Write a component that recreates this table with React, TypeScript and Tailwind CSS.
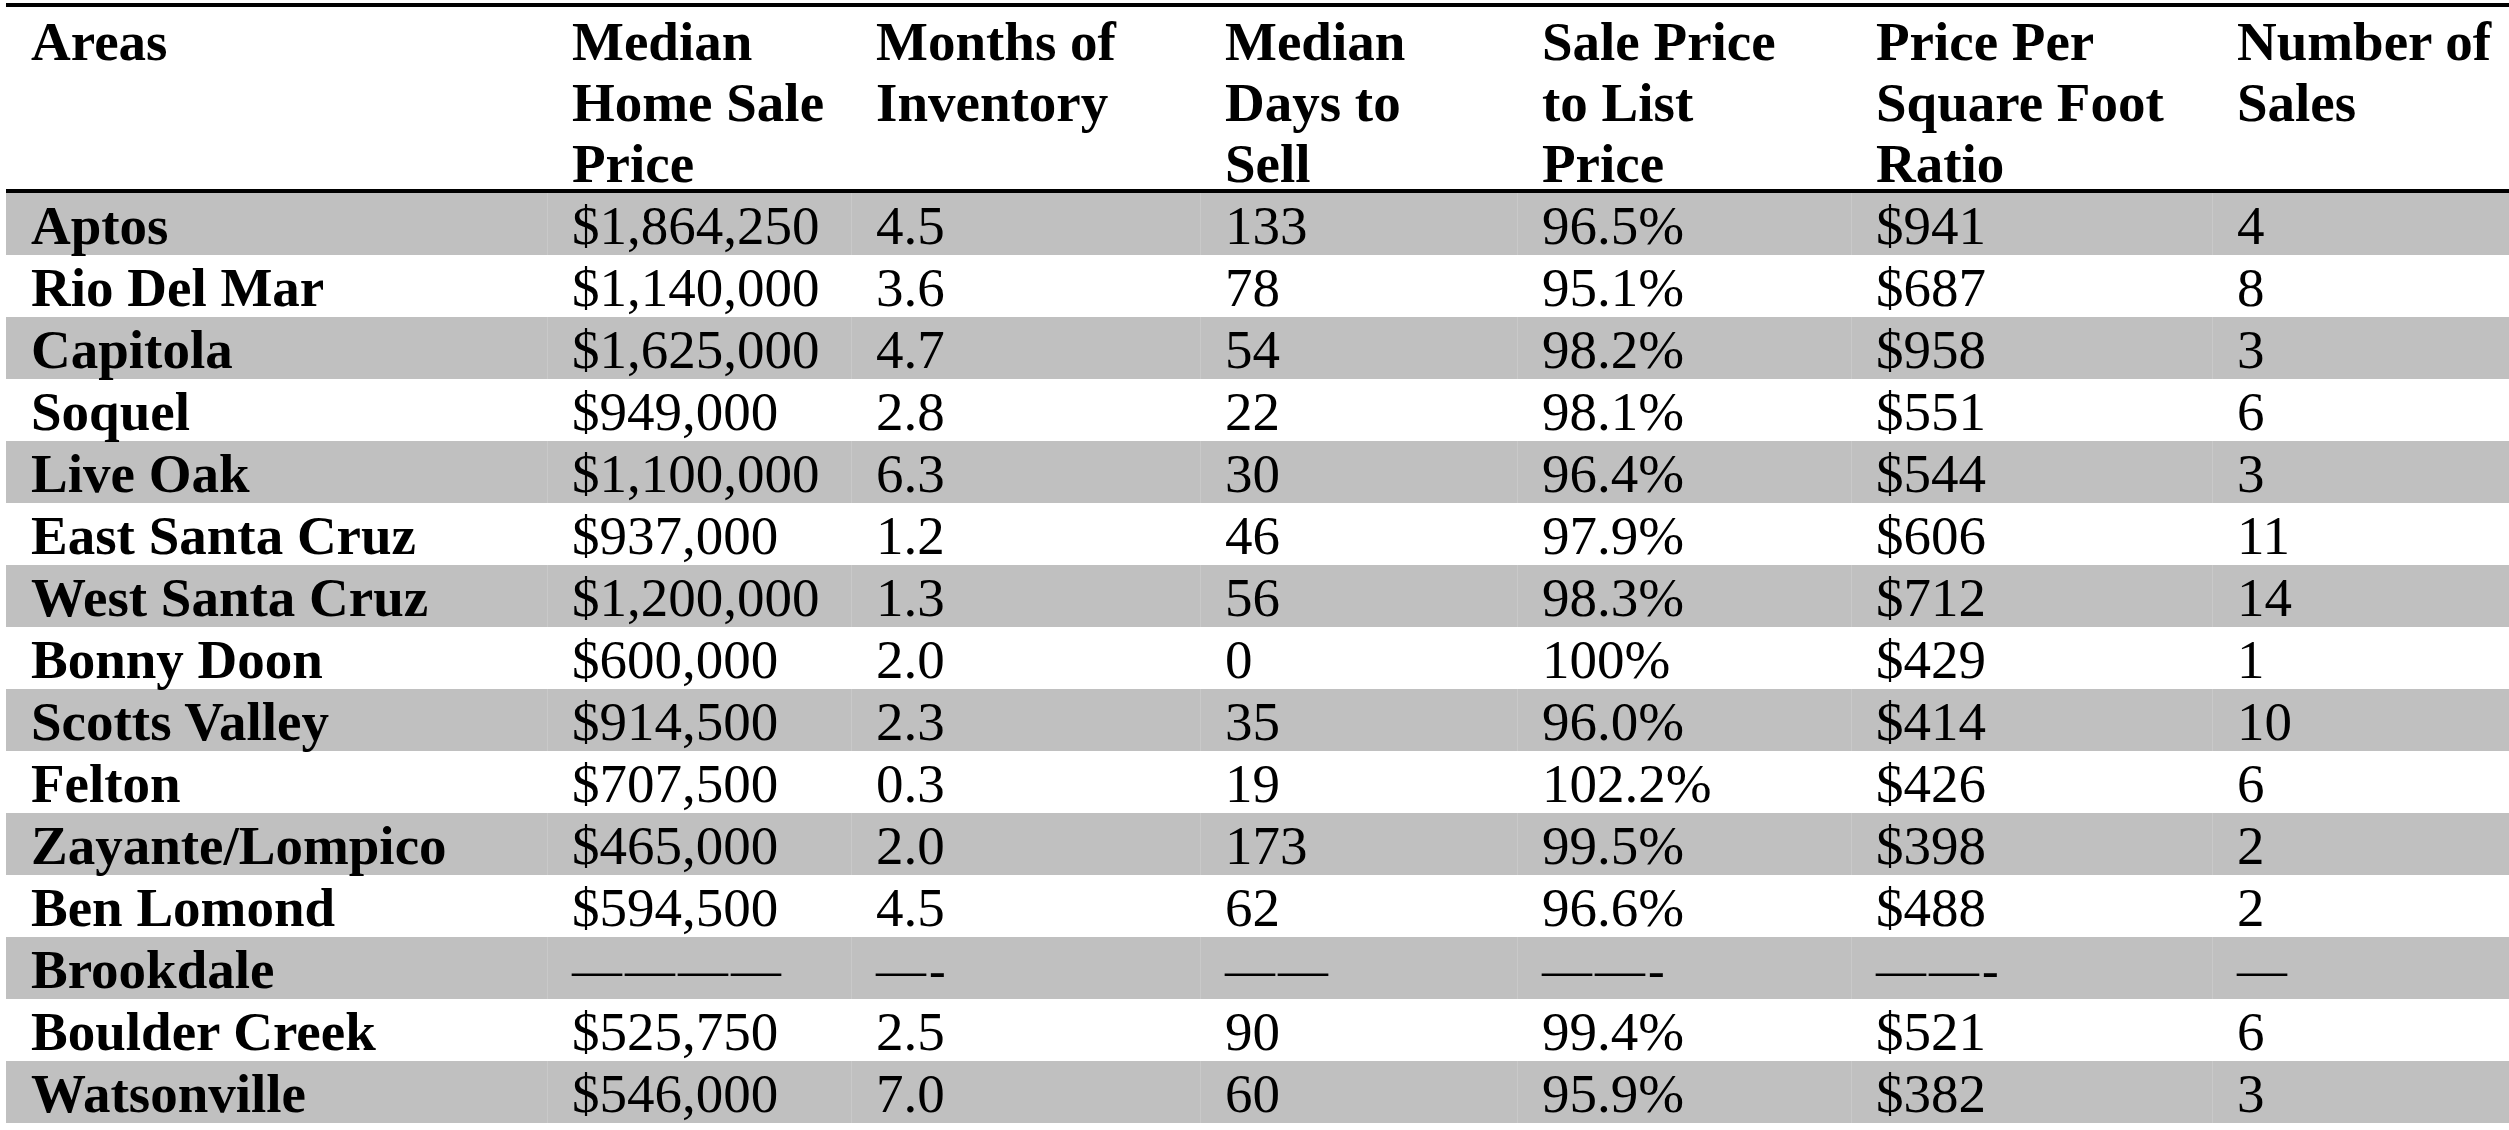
import clsx from 'clsx';

// Santa Cruz County market snapshot table
const headers: string[][] = [
  ['Areas'],
  ['Median', 'Home Sale', 'Price'],
  ['Months of', 'Inventory'],
  ['Median', 'Days to', 'Sell'],
  ['Sale Price', 'to List', 'Price'],
  ['Price Per', 'Square Foot', 'Ratio'],
  ['Number of', 'Sales'],
];

const rows: string[][] = [
  ['Aptos', '$1,864,250', '4.5', '133', '96.5%', '$941', '4'],
  ['Rio Del Mar', '$1,140,000', '3.6', '78', '95.1%', '$687', '8'],
  ['Capitola', '$1,625,000', '4.7', '54', '98.2%', '$958', '3'],
  ['Soquel', '$949,000', '2.8', '22', '98.1%', '$551', '6'],
  ['Live Oak', '$1,100,000', '6.3', '30', '96.4%', '$544', '3'],
  ['East Santa Cruz', '$937,000', '1.2', '46', '97.9%', '$606', '11'],
  ['West Santa Cruz', '$1,200,000', '1.3', '56', '98.3%', '$712', '14'],
  ['Bonny Doon', '$600,000', '2.0', '0', '100%', '$429', '1'],
  ['Scotts Valley', '$914,500', '2.3', '35', '96.0%', '$414', '10'],
  ['Felton', '$707,500', '0.3', '19', '102.2%', '$426', '6'],
  ['Zayante/Lompico', '$465,000', '2.0', '173', '99.5%', '$398', '2'],
  ['Ben Lomond', '$594,500', '4.5', '62', '96.6%', '$488', '2'],
  ['Brookdale', '————', '—-', '——', '——-', '——-', '—'],
  ['Boulder Creek', '$525,750', '2.5', '90', '99.4%', '$521', '6'],
  ['Watsonville', '$546,000', '7.0', '60', '95.9%', '$382', '3'],
];

const cols = 'grid grid-cols-[541px_304px_349px_317px_334px_361px_297px]';

export default function App() {
  return (
    <div className="w-[2509px] h-[1130px] overflow-hidden bg-white pt-[3px] pl-[6px] font-['Liberation_Serif',serif] text-[55px] text-black">
      <div className="border-t-4 border-black">
        {/* Header */}
        <div className={clsx(cols, 'h-[186px] border-b-4 border-black')}>
          {headers.map((lines, i) => (
            <div key={i} className="pl-[25px] pt-[4px] font-bold leading-[61px] whitespace-nowrap">
              {lines.map((l) => (
                <div key={l}>{l}</div>
              ))}
            </div>
          ))}
        </div>

        {/* Body */}
        {rows.map((row, r) => {
          const shaded = r % 2 === 0;
          const isDash = row[1].startsWith('—');
          return (
            <div key={row[0]} className={clsx(cols, 'h-[62px]', shaded ? 'bg-[#c0c0c0]' : 'bg-white')}>
              {row.map((cell, c) => (
                <div
                  key={c}
                  className={clsx(
                    'h-[62px] pt-[4px] leading-[58px] whitespace-nowrap',
                    c === 0 ? 'pl-[25px] font-bold' : 'pl-[24px] border-l',
                    shaded ? 'border-[#c9c9c9]' : 'border-white',
                    isDash && c > 0 && 'text-[50px] tracking-[3px]'
                  )}
                >
                  {cell}
                </div>
              ))}
            </div>
          );
        })}
      </div>
    </div>
  );
}
